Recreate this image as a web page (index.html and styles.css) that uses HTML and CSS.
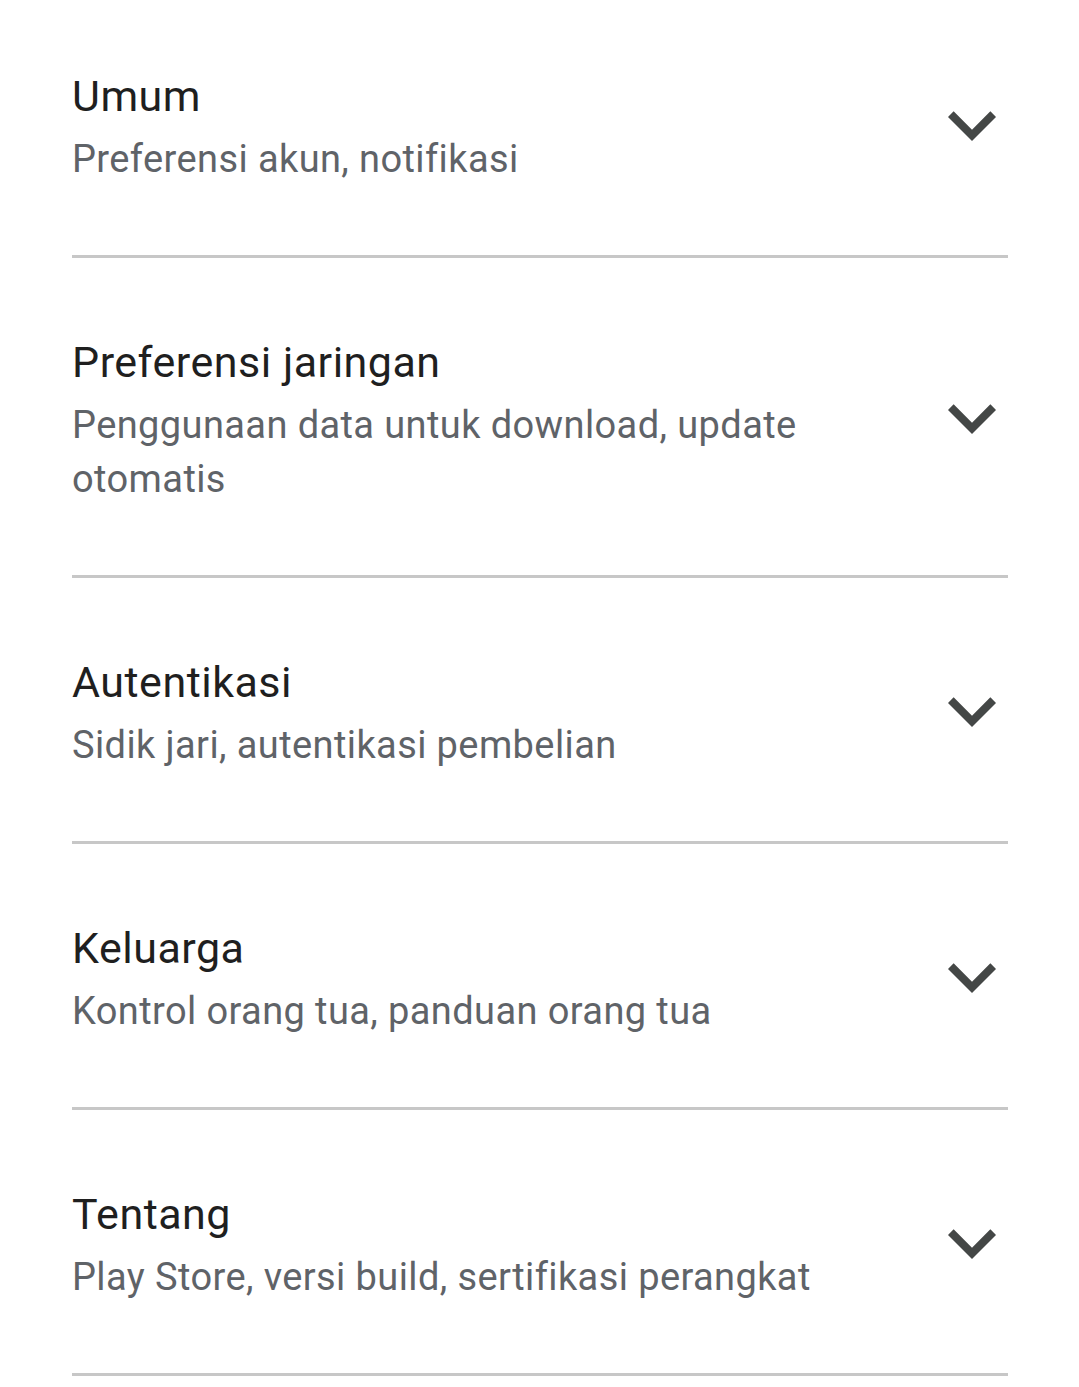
FILE: index.html
```html
<!DOCTYPE html>
<html lang="id">
<head>
<meta charset="utf-8">
<title>Setelan</title>
<link rel="stylesheet" href="styles.css">
</head>
<body>
<div class="list">
  <div class="item">
    <div class="text">
      <div class="title">Umum</div>
      <div class="sub">Preferensi akun, notifikasi</div>
    </div>
    <svg class="chev" viewBox="6 8.5 12 7.5" width="48" height="30"><path d="M16.59 8.59L12 13.17 7.41 8.59 6 10l6 6 6-6z"/></svg>
  </div>
  <div class="item">
    <div class="text">
      <div class="title">Preferensi jaringan</div>
      <div class="sub">Penggunaan data untuk download, update otomatis</div>
    </div>
    <svg class="chev" viewBox="6 8.5 12 7.5" width="48" height="30"><path d="M16.59 8.59L12 13.17 7.41 8.59 6 10l6 6 6-6z"/></svg>
  </div>
  <div class="item">
    <div class="text">
      <div class="title">Autentikasi</div>
      <div class="sub">Sidik jari, autentikasi pembelian</div>
    </div>
    <svg class="chev" viewBox="6 8.5 12 7.5" width="48" height="30"><path d="M16.59 8.59L12 13.17 7.41 8.59 6 10l6 6 6-6z"/></svg>
  </div>
  <div class="item">
    <div class="text">
      <div class="title">Keluarga</div>
      <div class="sub">Kontrol orang tua, panduan orang tua</div>
    </div>
    <svg class="chev" viewBox="6 8.5 12 7.5" width="48" height="30"><path d="M16.59 8.59L12 13.17 7.41 8.59 6 10l6 6 6-6z"/></svg>
  </div>
  <div class="item">
    <div class="text">
      <div class="title">Tentang</div>
      <div class="sub">Play Store, versi build, sertifikasi perangkat</div>
    </div>
    <svg class="chev" viewBox="6 8.5 12 7.5" width="48" height="30"><path d="M16.59 8.59L12 13.17 7.41 8.59 6 10l6 6 6-6z"/></svg>
  </div>
</div>
</body>
</html>
```
FILE: styles.css
```css
html, body {
  margin: 0;
  padding: 0;
  background: #ffffff;
}
body {
  font-family: Roboto, "Noto Sans", "Liberation Sans", sans-serif;
}
.list {
  padding: 0 71px 0 72px;
}
.item {
  display: flex;
  align-items: center;
  padding: 76px 0 69px;
  border-bottom: 3px solid #c7c7c7;
}
.item:first-child {
  padding-top: 68px;
}
.text {
  flex: 1;
  min-width: 0;
  margin-right: 110px;
}
.title {
  font-size: 43px;
  line-height: 56px;
  letter-spacing: 0.5px;
  color: #1f1f1f;
  margin-bottom: 8px;
}
.sub {
  font-size: 38px;
  line-height: 54px;
  letter-spacing: 0.4px;
  color: #5f6368;
}
.chev {
  flex: none;
  fill: #444746;
  margin-right: 12px;
  margin-bottom: 2px;
}
```
